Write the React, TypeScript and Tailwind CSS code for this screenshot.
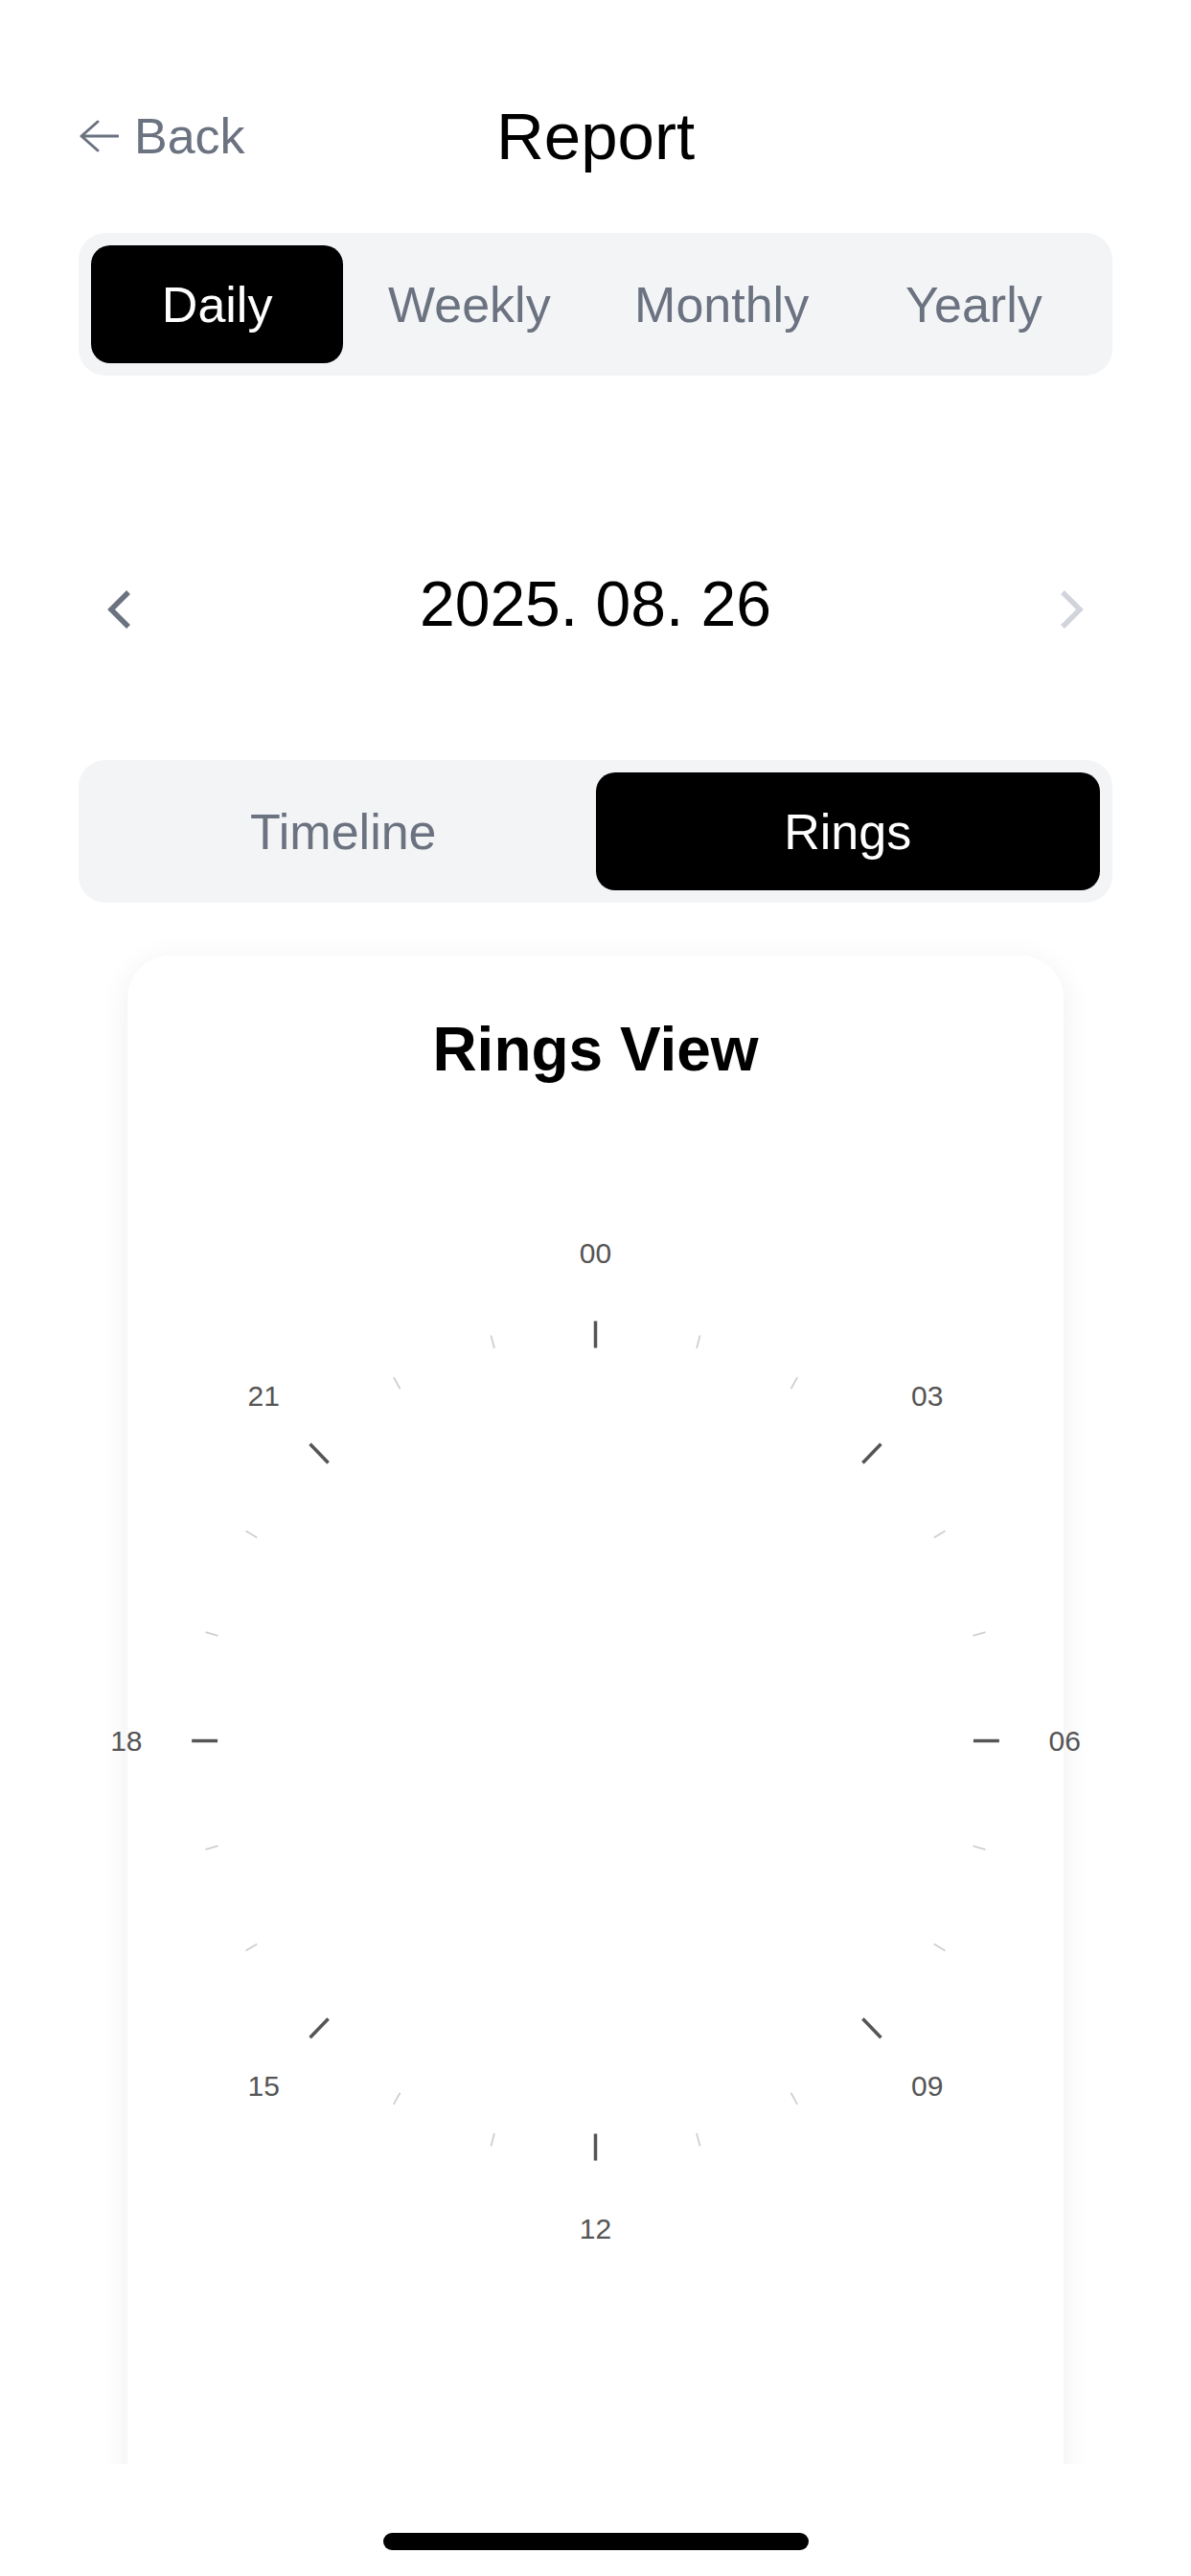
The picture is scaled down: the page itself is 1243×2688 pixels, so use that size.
import React from "react";

const FONT = { fontFamily: '"Liberation Sans", Arial, sans-serif' };

function Clock() {
  const W = 978;
  const H = 1444;
  const cx = 488.5;
  const cy = 689.5;
  const k = 0.962;
  const outer = 438;
  const majorInner = 410;
  const minorInner = 424;
  const labelR = 509;
  const ticks = [];
  for (let i = 0; i < 24; i++) {
    const a = (i * 15 * Math.PI) / 180;
    const s = Math.sin(a);
    const c = Math.cos(a);
    const major = i % 3 === 0;
    const r1 = major ? majorInner : minorInner;
    ticks.push(
      <line
        key={"t" + i}
        x1={cx + k * r1 * s}
        y1={cy - r1 * c}
        x2={cx + k * outer * s}
        y2={cy - outer * c}
        stroke={major ? "#555555" : "#cfcfcf"}
        strokeWidth={major ? 3.5 : 1.8}
        strokeLinecap="butt"
      />
    );
    if (major) {
      ticks.push(
        <text
          key={"l" + i}
          x={cx + k * labelR * s}
          y={cy - labelR * c}
          textAnchor="middle"
          dominantBaseline="central"
          fontSize={30}
          fill="#555555"
          style={FONT}
        >
          {String(i).padStart(2, "0")}
        </text>
      );
    }
  }
  return (
    <svg
      width={W}
      height={H}
      viewBox={`0 0 ${W} ${H}`}
      overflow="visible"
      className="block shrink-0 overflow-visible"
    >
      {ticks}
    </svg>
  );
}

export default function App() {
  return (
    <div className="w-[1243px] h-[2688px] bg-white flex flex-col" style={FONT}>
      <div className="h-[2571px] overflow-hidden flex flex-col shrink-0">
        {/* Header */}
        <div className="mt-[92px] h-[100px] px-[82px] flex items-center shrink-0">
          <div className="flex-1 flex items-center gap-[16px] text-[#6b7280]">
            <svg width="42" height="34" viewBox="0 0 42 34" className="shrink-0">
              <path
                d="M20 2 L3 17 L20 32 M3 17 H41"
                fill="none"
                stroke="#6b7280"
                strokeWidth="3"
                strokeLinecap="round"
                strokeLinejoin="round"
              />
            </svg>
            <span className="text-[52px] leading-none">Back</span>
          </div>
          <div className="text-[69px] leading-none text-black">Report</div>
          <div className="flex-1" />
        </div>

        {/* Period segmented control */}
        <div className="mt-[51px] mx-[82px] h-[149px] p-[13px] bg-[#f3f4f6] rounded-[28px] flex shrink-0">
          <div className="flex-1 flex items-center justify-center bg-black text-white rounded-[20px] text-[52px]">
            Daily
          </div>
          <div className="flex-1 flex items-center justify-center text-[#6b7280] text-[52px]">
            Weekly
          </div>
          <div className="flex-1 flex items-center justify-center text-[#6b7280] text-[52px]">
            Monthly
          </div>
          <div className="flex-1 flex items-center justify-center text-[#6b7280] text-[52px]">
            Yearly
          </div>
        </div>

        {/* Date row */}
        <div className="mt-[188px] h-[100px] px-[109px] flex items-center justify-between shrink-0">
          <svg width="30" height="42" viewBox="0 0 30 42" className="mt-[12px] shrink-0">
            <path d="M25 3 L7 21 L25 39" fill="none" stroke="#6b7280" strokeWidth="5.5" strokeLinejoin="miter" />
          </svg>
          <div className="text-[66px] leading-none text-black">2025. 08. 26</div>
          <svg width="30" height="42" viewBox="0 0 30 42" className="mt-[12px] shrink-0">
            <path d="M5 3 L23 21 L5 39" fill="none" stroke="#d1d5db" strokeWidth="5.5" strokeLinejoin="miter" />
          </svg>
        </div>

        {/* View segmented control */}
        <div className="mt-[113px] mx-[82px] h-[149px] p-[13px] bg-[#f3f4f6] rounded-[28px] flex shrink-0">
          <div className="flex-1 flex items-center justify-center text-[#6b7280] text-[52px]">
            Timeline
          </div>
          <div className="flex-1 flex items-center justify-center bg-black text-white rounded-[20px] text-[52px]">
            Rings
          </div>
        </div>

        {/* Card */}
        <div className="mt-[55px] mx-[133px] h-[1700px] shrink-0 bg-white rounded-[45px] shadow-[0_6px_32px_rgba(0,0,0,0.07)] flex flex-col items-center pt-[66px]">
          <div className="h-[64px] leading-[64px] text-[64px] font-bold text-black">Rings View</div>
          <Clock />
        </div>
      </div>

      {/* Home indicator */}
      <div className="flex-1 flex justify-center pt-[72px]">
        <div className="w-[444px] h-[18px] rounded-full bg-black" />
      </div>
    </div>
  );
}
